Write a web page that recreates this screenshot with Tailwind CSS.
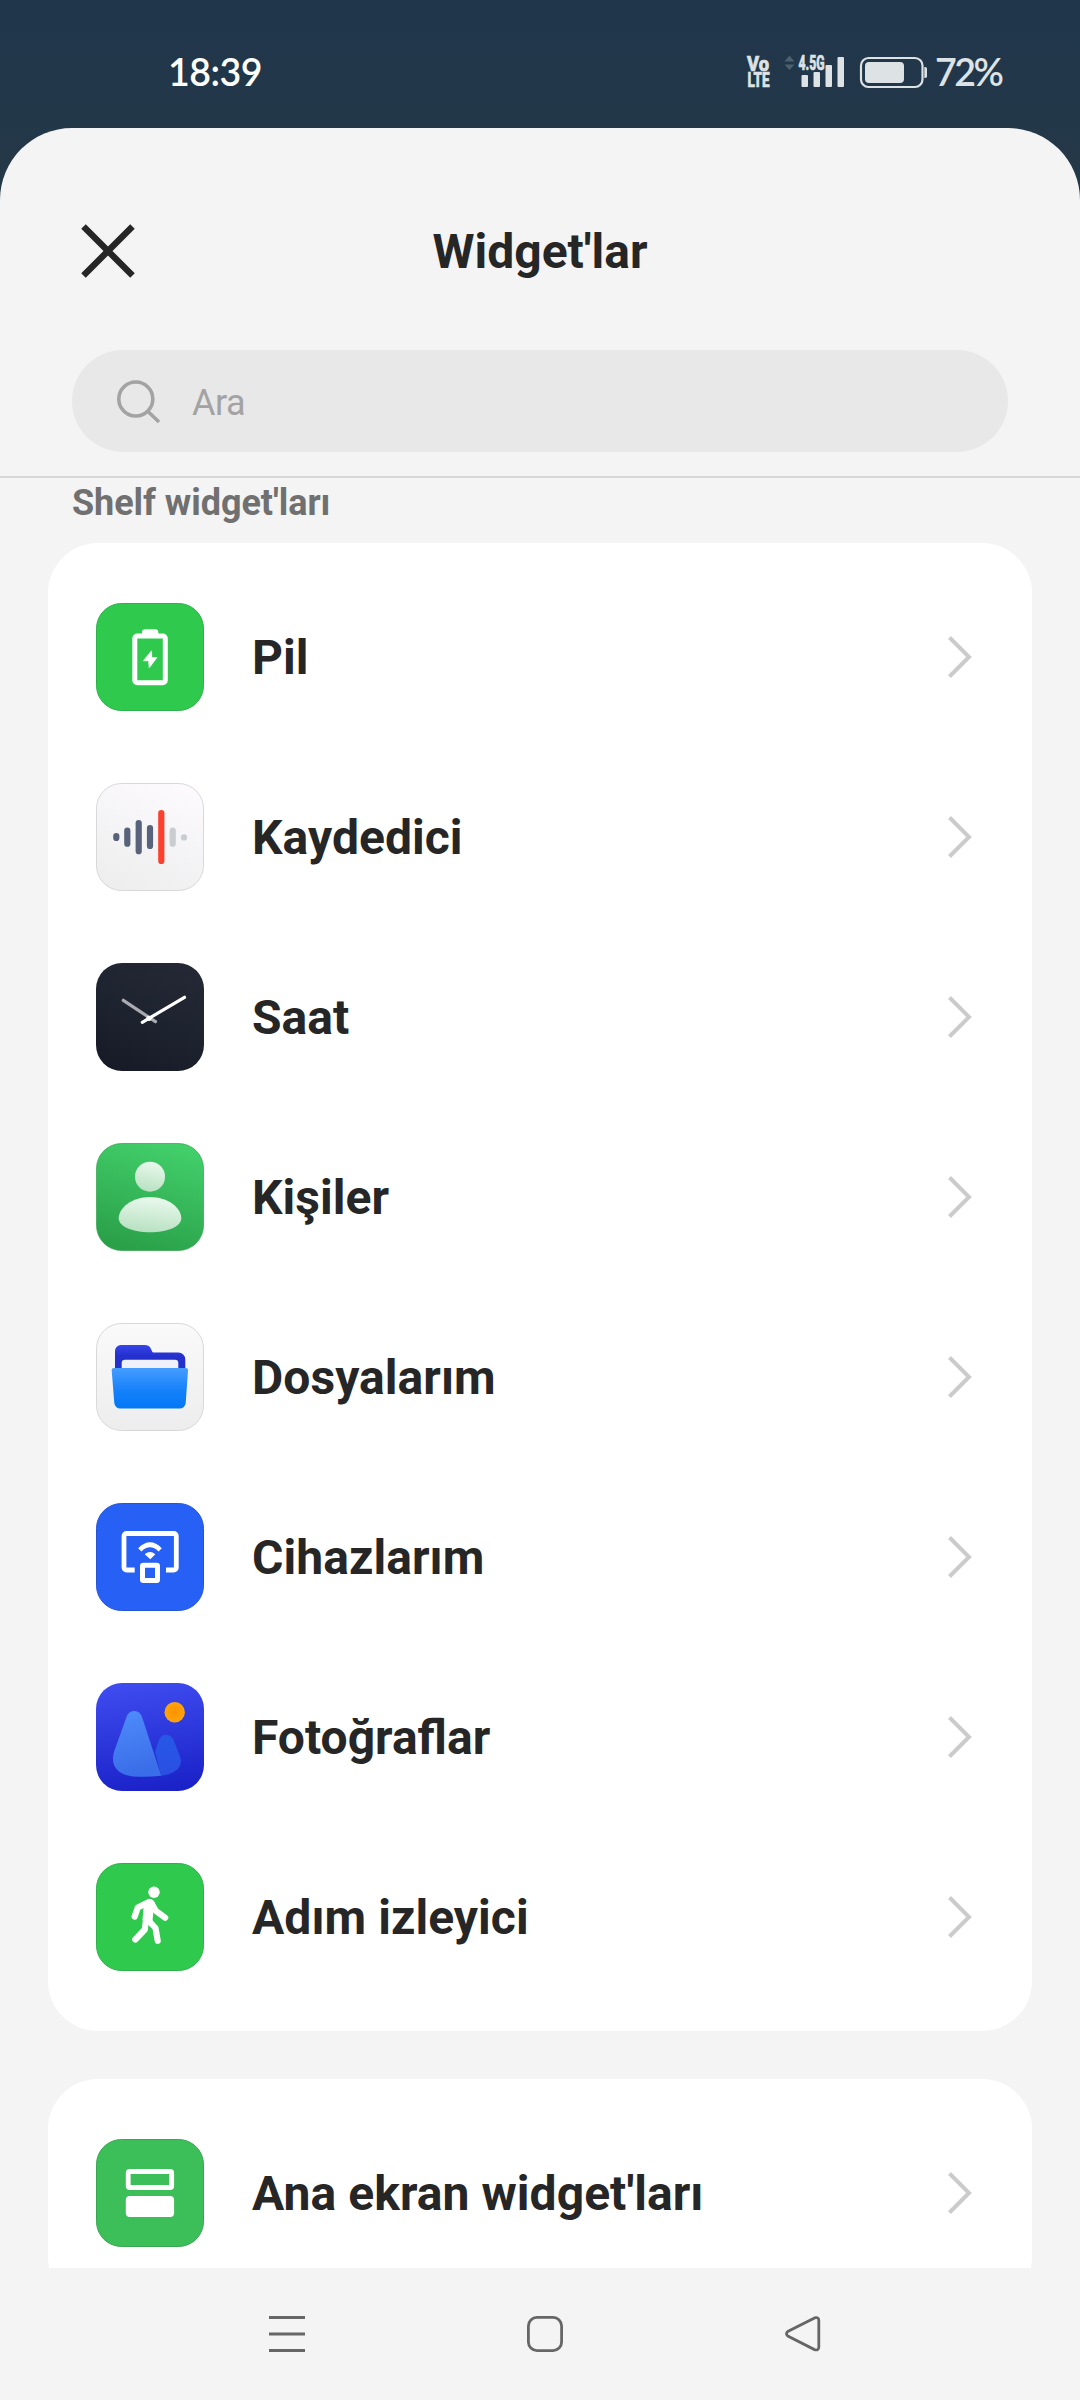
<!DOCTYPE html>
<html lang="tr">
<head>
<meta charset="utf-8">
<title>Widget'lar</title>
<script src="https://cdn.jsdelivr.net/npm/@tailwindcss/browser@4"></script>
</head>
<body class="bg-[#f4f4f4]">
<svg width="0" height="0" class="absolute">
  <defs>
    <linearGradient id="gRec" x1="0.3" y1="1" x2="0.7" y2="0"><stop offset="0" stop-color="#eeeeef"/><stop offset="1" stop-color="#fcfafc"/></linearGradient>
    <linearGradient id="gClock" x1="0.3" y1="1" x2="0.7" y2="0"><stop offset="0" stop-color="#171b27"/><stop offset="0.5" stop-color="#1e2330"/><stop offset="1" stop-color="#242834"/></linearGradient>
    <linearGradient id="gContact" x1="0.35" y1="1" x2="0.65" y2="0"><stop offset="0" stop-color="#2aa049"/><stop offset="1" stop-color="#42cf6a"/></linearGradient>
    <linearGradient id="gPerson" x1="0" y1="1" x2="0.2" y2="0"><stop offset="0" stop-color="#b4dfbe"/><stop offset="1" stop-color="#e6f7ea"/></linearGradient>
    <linearGradient id="gFile" x1="0" y1="1" x2="0" y2="0"><stop offset="0" stop-color="#ededed"/><stop offset="1" stop-color="#fafafa"/></linearGradient>
    <linearGradient id="gBack" x1="0" y1="0" x2="0" y2="1"><stop offset="0" stop-color="#3745ea"/><stop offset="0.4" stop-color="#2430cc"/></linearGradient>
    <linearGradient id="gFront" x1="0" y1="0" x2="0" y2="1"><stop offset="0" stop-color="#459dff"/><stop offset="0.55" stop-color="#1681fa"/><stop offset="1" stop-color="#0278f6"/></linearGradient>
    <linearGradient id="gPhoto" x1="0.4" y1="0" x2="0.55" y2="1"><stop offset="0" stop-color="#3e4bef"/><stop offset="1" stop-color="#1a22c8"/></linearGradient>
    <linearGradient id="gM1" x1="0" y1="0" x2="0.2" y2="1"><stop offset="0" stop-color="#4f8dfd"/><stop offset="1" stop-color="#3a6de8"/></linearGradient>
    <linearGradient id="gM2" x1="0" y1="0" x2="0" y2="1"><stop offset="0" stop-color="#2658e6"/><stop offset="1" stop-color="#2a4fe2"/></linearGradient>
    <radialGradient id="gSun"><stop offset="0" stop-color="#fb9200"/><stop offset="1" stop-color="#fea40c"/></radialGradient>
  </defs>
</svg>

<div class="flex h-[2400px] w-[1080px] flex-col overflow-hidden bg-linear-to-b from-[#20364b] from-0% to-[#243847] to-8% font-['Roboto',sans-serif] text-[#262626]">
  <!-- status bar -->
  <header class="flex h-32 shrink-0 items-start justify-between pt-12 pr-[74px] pl-[168px]">
    <div class="font-['Lato',sans-serif] text-[37.5px] leading-[48px] font-semibold tracking-[-0.5px] text-white">18:39</div>
    <div class="flex items-start text-[#dde2e5]">
      <svg class="h-12 w-[190px]" viewBox="744 48 190 48" fill="currentColor" font-family="Roboto" font-weight="800">
        <g stroke="currentColor" stroke-width=".7">
        <text x="747" y="70.800" font-size="19.500" textLength="22" lengthAdjust="spacingAndGlyphs">Vo</text>
        <text x="747.500" y="86.800" font-size="19.500" textLength="22" lengthAdjust="spacingAndGlyphs">LTE</text>
        <text x="798.500" y="70" font-size="19.500" textLength="26" lengthAdjust="spacingAndGlyphs">4.5G</text>
        </g>
        <path d="M784.500 61.500 789.500 55.500 794.500 61.500ZM784.500 64.500H794.500L789.500 70Z" fill="#4c606d"/>
        <rect x="801.500" y="75" width="6.500" height="12" rx="1"/><rect x="813.500" y="72" width="6.500" height="15" rx="1"/><rect x="825.500" y="65" width="6.500" height="22" rx="1"/><rect x="837.500" y="57" width="6.500" height="30" rx="1"/>
        <rect x="861" y="58" width="61.500" height="29" rx="7.500" fill="none" stroke="currentColor" stroke-width="2.200"/>
        <rect x="865" y="62" width="39" height="21" rx="4"/>
        <path d="M924.300 67h1a1.700 1.700 0 0 1 1.700 1.700v7.600a1.700 1.700 0 0 1-1.700 1.700h-1z"/>
      </svg>
      <div class="w-[72px] pl-px font-['Lato',sans-serif] text-[37.500px] leading-[48px] font-semibold tracking-[-2.500px] whitespace-nowrap">72%</div>
    </div>
  </header>

  <!-- sheet -->
  <main class="flex min-h-0 flex-1 flex-col rounded-t-[72px] bg-[#f4f4f4]">
    <div class="flex h-[222px] shrink-0 items-start px-[72px] pt-[87px]">
      <svg class="size-[72px]" viewBox="0 0 72 72" fill="none" stroke="#262626" stroke-width="6.400"><path d="M11.500 11.500 60.500 60.500M60.500 11.500 11.500 60.500"/></svg>
      <h1 class="flex-1 pt-px pr-[72px] text-center text-[48px] leading-[72px] font-bold">Widget'lar</h1>
    </div>
    <div class="mx-[72px] flex h-[102px] shrink-0 items-center gap-6 rounded-full bg-[#e8e8e8] pl-10 text-[#a3a3a3]">
      <svg class="size-14" viewBox="0 0 56 56" fill="none" stroke="currentColor" stroke-width="3.600"><circle cx="23.800" cy="26" r="17"/><path d="M36 38.500 47 49"/></svg>
      <span class="pt-[3px] text-[36px] leading-[42px] font-normal tracking-[-0.500px]">Ara</span>
    </div>
    <div class="mt-6 h-0.5 shrink-0 bg-[#d6d7d7]"></div>
    <section class="min-h-0 flex-1 overflow-hidden px-12">
      <h2 class="h-[65px] pt-1 pl-6 text-[36px] leading-[42px] font-bold tracking-[-0.050px] text-[#707070]">Shelf widget'ları</h2>

      <ul class="rounded-[50px] bg-white py-6 text-[48px] font-bold tracking-[0.060px]">
        <li class="flex h-[180px] items-center px-12">
          <svg class="size-[108px]" viewBox="0 0 108 108"><rect x=".5" y=".5" width="107" height="107" rx="25" fill="#2fc94e" stroke="#2cb04a"/><rect x="38.800" y="33" width="30.500" height="46.800" rx="2.500" fill="none" stroke="#fff" stroke-width="5"/><path d="M46 31v-1.700a3 3 0 0 1 3-3h10.300a3 3 0 0 1 3 3V31z" fill="#fff"/><path d="M55.500 47.800 47.300 57.800h5.200L53.200 65 61 54.600H55.800Z" fill="#fff" stroke="#fff" stroke-width=".6" stroke-linejoin="round"/></svg>
          <span class="ml-12 flex-1 pt-0.5">Pil</span>
          <svg class="h-12 w-[36px]" viewBox="0 0 36 48" fill="none" stroke="#cbcbcb" stroke-width="4"><path d="M1.500 4.500 21 24 1.500 43.500"/></svg>
        </li>
        <li class="flex h-[180px] items-center px-12">
          <svg class="size-[108px]" viewBox="0 0 108 108"><rect x=".5" y=".5" width="107" height="107" rx="25" fill="url(#gRec)" stroke="#d8d8d9"/><g stroke-width="6.200" stroke-linecap="round"><path d="M20.300 53v2M31.300 47.500v13.200M42.700 40v28.200M54 45v18" stroke="#58627a"/><path d="M65.300 30v48" stroke="#fb402d"/><path d="M76.700 47.500v13.200M88 54.300v.1" stroke="#c9cdd2"/></g></svg>
          <span class="ml-12 flex-1 pt-0.5">Kaydedici</span>
          <svg class="h-12 w-[36px]" viewBox="0 0 36 48" fill="none" stroke="#cbcbcb" stroke-width="4"><path d="M1.500 4.500 21 24 1.500 43.500"/></svg>
        </li>
        <li class="flex h-[180px] items-center px-12">
          <svg class="size-[108px]" viewBox="0 0 108 108"><rect width="108" height="108" rx="26" fill="url(#gClock)"/><g stroke-width="3.200" stroke-linecap="round"><path d="M27.300 37.300 59.500 58.700" stroke="#a9abb0"/><path d="M46.300 59.300 88.500 34.300" stroke="#fff"/></g><circle cx="53" cy="55.300" r="2.600" fill="#fff"/></svg>
          <span class="ml-12 flex-1 pt-0.5">Saat</span>
          <svg class="h-12 w-[36px]" viewBox="0 0 36 48" fill="none" stroke="#cbcbcb" stroke-width="4"><path d="M1.500 4.500 21 24 1.500 43.500"/></svg>
        </li>
        <li class="flex h-[180px] items-center px-12">
          <svg class="size-[108px]" viewBox="0 0 108 108"><rect x=".5" y=".5" width="107" height="107" rx="25" fill="url(#gContact)" stroke="#2f9f4c" stroke-opacity=".7"/><circle cx="54" cy="33.700" r="15" fill="url(#gPerson)"/><path d="M22.700 75.300C22.700 65 36 54 54 54S85.300 65 85.300 75.300C85.300 84 71 89.300 54 89.300S22.700 84 22.700 75.300Z" fill="url(#gPerson)"/></svg>
          <span class="ml-12 flex-1 pt-0.5">Kişiler</span>
          <svg class="h-12 w-[36px]" viewBox="0 0 36 48" fill="none" stroke="#cbcbcb" stroke-width="4"><path d="M1.500 4.500 21 24 1.500 43.500"/></svg>
        </li>
        <li class="flex h-[180px] items-center px-12">
          <svg class="size-[108px]" viewBox="0 0 108 108"><rect x=".5" y=".5" width="107" height="107" rx="25" fill="url(#gFile)" stroke="#d8d8d8"/><path d="M19 50V28a6 6 0 0 1 6-6H48.500C52 22 54 23.500 55 26L56 28.200C56.500 29.300 57 29.500 58 29.500H82.300a7 7 0 0 1 7 7V50Z" fill="url(#gBack)"/><path d="M25.700 50V40a3.300 3.300 0 0 1 3.300-3.300H79a3.300 3.300 0 0 1 3.300 3.300V50Z" fill="#eef0fb"/><path d="M18 45H89.700a2.300 2.300 0 0 1 2.300 2.500L89.700 80a6 6 0 0 1-6 5.500H24.300a6 6 0 0 1-6-5.500L15.700 47.500A2.300 2.300 0 0 1 18 45Z" fill="url(#gFront)"/></svg>
          <span class="ml-12 flex-1 pt-0.5">Dosyalarım</span>
          <svg class="h-12 w-[36px]" viewBox="0 0 36 48" fill="none" stroke="#cbcbcb" stroke-width="4"><path d="M1.500 4.500 21 24 1.500 43.500"/></svg>
        </li>
        <li class="flex h-[180px] items-center px-12">
          <svg class="size-[108px]" viewBox="0 0 108 108"><rect x=".5" y=".5" width="107" height="107" rx="25" fill="#2660f5" stroke="#2454d4"/><g fill="none" stroke="#fff" stroke-width="4.800"><path d="M38.700 67H30.500A2.500 2.500 0 0 1 28 64.500V33A2.500 2.500 0 0 1 30.500 30.500H77.800A2.500 2.500 0 0 1 80.300 33V64.500A2.500 2.500 0 0 1 77.800 67H70"/><rect x="46.500" y="62.200" width="15" height="15.300" rx=".8" stroke-width="5"/><path d="M43.800 46.800Q54 36.800 64.200 46.800" stroke-width="4.600"/></g><path d="M48.700 51.200Q54 47 59.300 51.200L54.300 56.300Z" fill="#fff"/></svg>
          <span class="ml-12 flex-1 pt-0.5">Cihazlarım</span>
          <svg class="h-12 w-[36px]" viewBox="0 0 36 48" fill="none" stroke="#cbcbcb" stroke-width="4"><path d="M1.500 4.500 21 24 1.500 43.500"/></svg>
        </li>
        <li class="flex h-[180px] items-center px-12">
          <svg class="size-[108px]" viewBox="0 0 108 108"><rect width="108" height="108" rx="26" fill="url(#gPhoto)"/><path d="M59 69 63 57C65.500 50 74.500 50 77.500 57L83.500 72C88 83 81 90.500 65.300 92.800Z" fill="url(#gM2)"/><path d="M30.500 34C33 26 43.500 26 46 34L65.300 92.800Q50 94.500 38 93.500C22 92 13.500 83 18.300 68Z" fill="url(#gM1)"/><circle cx="78.700" cy="29.300" r="10.200" fill="url(#gSun)"/></svg>
          <span class="ml-12 flex-1 pt-0.5 tracking-normal">Fotoğraflar</span>
          <svg class="h-12 w-[36px]" viewBox="0 0 36 48" fill="none" stroke="#cbcbcb" stroke-width="4"><path d="M1.500 4.500 21 24 1.500 43.500"/></svg>
        </li>
        <li class="flex h-[180px] items-center px-12">
          <svg class="size-[108px]" viewBox="0 0 108 108"><rect x=".5" y=".5" width="107" height="107" rx="25" fill="#2fc94e" stroke="#2cb04a"/><circle cx="58" cy="29.300" r="5.700" fill="#fff"/><path d="M53 36C56 35.500 57.500 37 58.500 39L61 47 57.500 47.500 56.500 58 50 62 46.500 57 47.500 45 44 42Z" fill="#fff"/><g fill="none" stroke="#fff" stroke-width="6.200" stroke-linecap="round" stroke-linejoin="round"><path d="M38.700 53.500 41.800 44.500 53 39"/><path d="M55.500 40.500 60 48 69.200 54.700"/><path d="M50.300 54 48.800 66.500 39.300 76.500"/><path d="M52 57 59.500 65 61.700 77.800"/></g></svg>
          <span class="ml-12 flex-1 pt-0.5">Adım izleyici</span>
          <svg class="h-12 w-[36px]" viewBox="0 0 36 48" fill="none" stroke="#cbcbcb" stroke-width="4"><path d="M1.500 4.500 21 24 1.500 43.500"/></svg>
        </li>
      </ul>

      <ul class="mt-12 rounded-[50px] bg-white py-6 text-[48px] font-bold tracking-[0.060px]">
        <li class="flex h-[180px] items-center px-12">
          <svg class="size-[108px]" viewBox="0 0 108 108"><rect x=".5" y=".5" width="107" height="107" rx="25" fill="#3cbf58" stroke="#38a551"/><rect x="32.200" y="32.500" width="43.500" height="16" rx="1.500" fill="none" stroke="#fff" stroke-width="4.800"/><rect x="29.800" y="57" width="48.300" height="21" rx="4" fill="#fff"/></svg>
          <span class="ml-12 flex-1 pt-0.5">Ana ekran widget'ları</span>
          <svg class="h-12 w-[36px]" viewBox="0 0 36 48" fill="none" stroke="#cbcbcb" stroke-width="4"><path d="M1.500 4.500 21 24 1.500 43.500"/></svg>
        </li>
      </ul>
    </section>

    <!-- navigation bar -->
    <nav class="flex h-[132px] shrink-0 items-center gap-[222px] pl-[269px]">
      <svg class="size-9" viewBox="0 0 36 36" fill="none" stroke="#666" stroke-width="3"><path d="M0 1.500H36M0 18H36M0 34.500H36"/></svg>
      <svg class="size-9" viewBox="0 0 36 36" fill="none" stroke="#666" stroke-width="2.800"><rect x="1.400" y="1.400" width="33.200" height="33.200" rx="8.500"/></svg>
      <svg class="size-9" viewBox="0 0 36 36" fill="none" stroke="#666" stroke-width="2.800"><path d="M29.500 1.900 2.800 15.500Q0.200 17.800 2.800 20L29.500 33.600Q33.800 35 33.800 31V4.500Q33.800 .5 29.500 1.900Z"/></svg>
    </nav>
  </main>
</div>
</body>
</html>
